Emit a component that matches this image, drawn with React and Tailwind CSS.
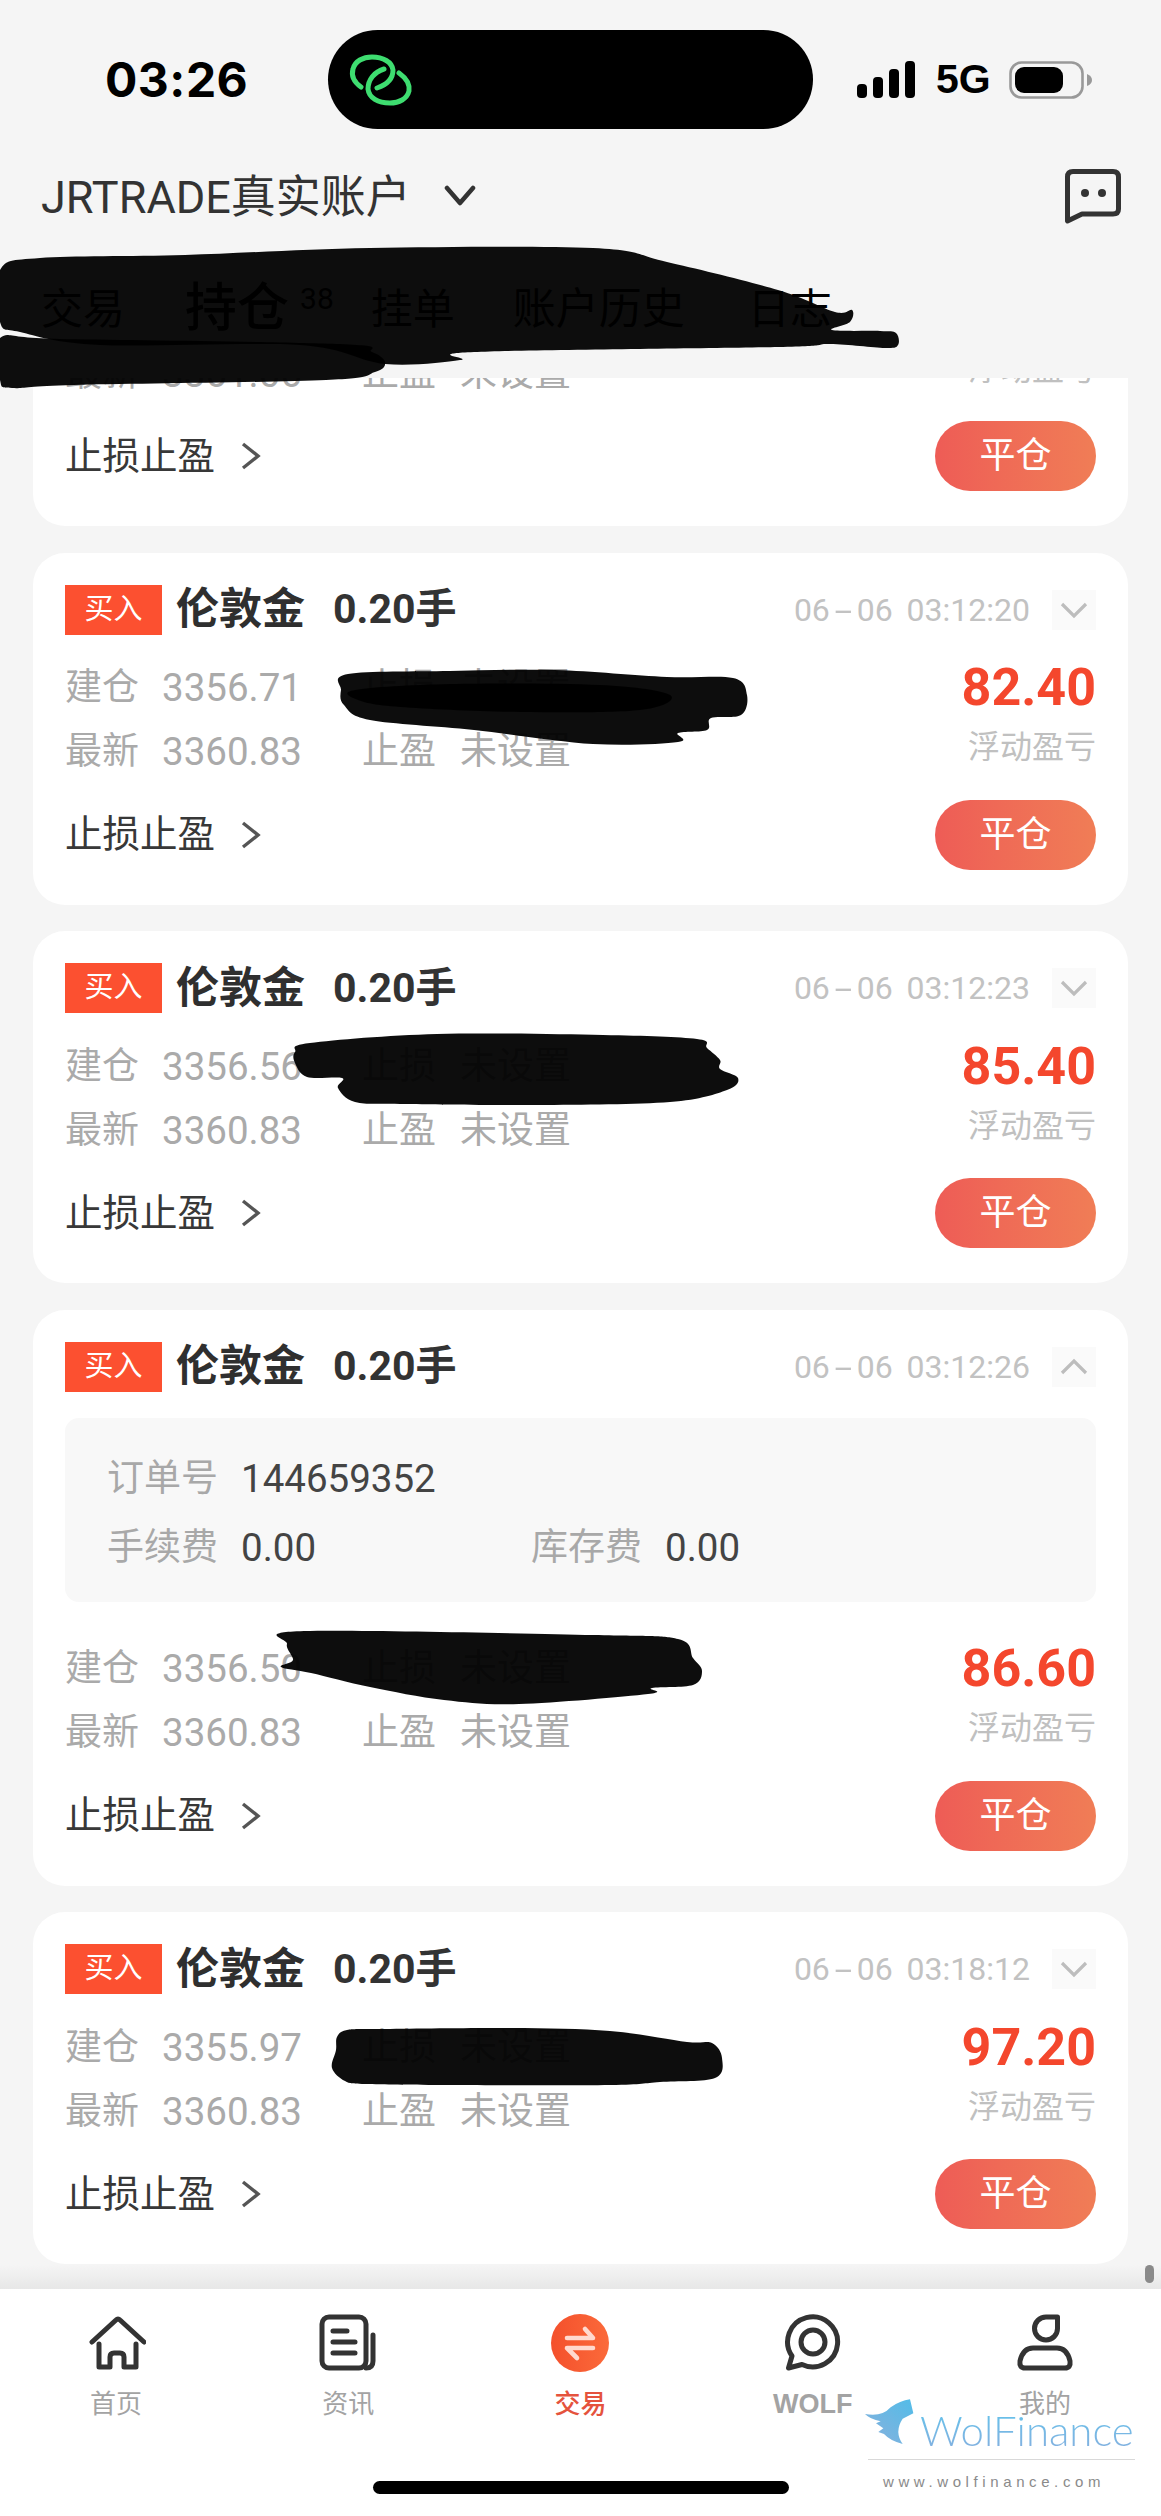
import React from "react";

function smooth(pts) {
  const n = pts.length;
  let d = `M${pts[0][0]} ${pts[0][1]}`;
  for (let i = 0; i < n; i++) {
    const p0 = pts[(i - 1 + n) % n], p1 = pts[i], p2 = pts[(i + 1) % n], p3 = pts[(i + 2) % n];
    const c1x = p1[0] + (p2[0] - p0[0]) / 6, c1y = p1[1] + (p2[1] - p0[1]) / 6;
    const c2x = p2[0] - (p3[0] - p1[0]) / 6, c2y = p2[1] - (p3[1] - p1[1]) / 6;
    d += ` C${c1x.toFixed(1)} ${c1y.toFixed(1)} ${c2x.toFixed(1)} ${c2y.toFixed(1)} ${p2[0]} ${p2[1]}`;
  }
  return d + "Z";
}

const SCRIBBLES = [
  [[0,270],[40,258],[185,255],[370,248],[593,248],[667,262],[778,290],[835,312],[852,310],[850,322],[832,330],[880,331],[896,333],[898,345],[885,348],[830,344],[778,347],[474,352],[460,360],[385,364],[300,345],[100,345],[20,332],[0,322]],
  [[0,338],[60,339],[340,344],[372,352],[385,362],[375,372],[326,380],[74,385],[12,388],[0,380]],
  [[348,674],[450,671],[555,670],[667,677],[733,678],[747,695],[741,715],[711,718],[707,730],[678,733],[678,742],[593,744],[474,730],[370,720],[344,705],[341,690]],
  [[355,690],[450,684],[600,685],[670,695],[640,710],[520,712],[400,707],[358,700]],
  [[295,1052],[310,1043],[437,1034],[603,1035],[697,1039],[707,1048],[720,1060],[720,1069],[738,1078],[727,1090],[670,1102],[537,1105],[400,1104],[355,1102],[338,1088],[342,1078],[307,1077],[295,1063]],
  [[304,1631],[593,1635],[678,1639],[693,1658],[702,1671],[693,1685],[652,1688],[648,1694],[519,1704],[444,1700],[370,1687],[311,1673],[281,1667],[293,1660],[287,1644]],
  [[347,2030],[380,2029],[510,2028],[610,2031],[687,2042],[712,2043],[722,2058],[715,2078],[660,2082],[610,2085],[450,2085],[365,2084],[345,2081],[332,2068],[336,2050],[337,2037]],
];

function Chevron({ up }) {
  return (
    <div className="w-[44px] h-[40px] ml-[22px] bg-[#fafafa] flex items-center justify-center">
      <svg width="30" height="20" viewBox="0 0 30 20" fill="none" stroke="#bdbdbd" strokeWidth="3.2">
        <path d={up ? "M3 16 L15 4 L27 16" : "M3 4 L15 16 L27 4"} />
      </svg>
    </div>
  );
}

function Card({ date, open, price, profit, order }) {
  return (
    <div className="bg-white rounded-[32px] px-[32px] pt-[32px] pb-[35px] flex flex-col">
      <div className="flex items-center h-[50px]">
        <div className="w-[97px] h-[50px] bg-[#fc5030] text-white text-[29px] flex items-center justify-center">买入</div>
        <span className="ml-[14px] w-[157px] text-[43px] font-bold text-[#2f2f2f] leading-none">伦敦金</span>
        <span className="text-[41px] font-bold text-[#333] leading-none">0.20手</span>
        <span className="ml-auto text-[32px] text-[#c2c2c2] leading-none [word-spacing:6px]">
          {date.slice(0, 2)}
          <span className="inline-block mx-[9px] scale-x-200">-</span>
          {date.slice(3)}
        </span>
        <Chevron up={!!order} />
      </div>
      {order && (
        <div className="mt-[26px] mb-[14px] h-[184px] bg-[#f8f8f8] rounded-[14px] px-[42px] pt-[25px] text-[37px]">
          <div className="flex items-center h-[72px]">
            <span className="w-[134px] text-[#a8a8a8]">订单号</span>
            <span className="text-[38.5px] text-[#444]">{order}</span>
          </div>
          <div className="flex items-center h-[66px]">
            <span className="w-[134px] text-[#a8a8a8]">手续费</span>
            <span className="w-[290px] text-[38.5px] text-[#444]">0.00</span>
            <span className="w-[134px] text-[#a8a8a8]">库存费</span>
            <span className="text-[38.5px] text-[#444]">0.00</span>
          </div>
        </div>
      )}
      <div className="mt-[20px] text-[37px] text-[#aaaaaa]">
        <div className="flex items-center h-[65px] pt-[2px]">
          <span className="w-[97px]">建仓</span>
          <span className="w-[200px] text-[38.5px]">{open}</span>
          <span className="w-[98px]">止损</span>
          <span>未设置</span>
          <span className="ml-auto text-[52px] font-bold text-[#f4472d] leading-none">{price}</span>
        </div>
        <div className="flex items-center h-[65px]">
          <span className="w-[97px]">最新</span>
          <span className="w-[200px] text-[38.5px]">{profit}</span>
          <span className="w-[98px]">止盈</span>
          <span>未设置</span>
          <span className="ml-auto pb-[10px] text-[32px] text-[#c0c0c0]">浮动盈亏</span>
        </div>
      </div>
      <div className="mt-[15px] h-[70px] flex items-center">
        <span className="text-[37.5px] text-[#383838]">止损止盈</span>
        <svg className="ml-[25px]" width="22" height="30" viewBox="0 0 22 30" fill="none" stroke="#555" strokeWidth="3.4">
          <path d="M3 3 L18 15 L3 27" />
        </svg>
        <button className="ml-auto w-[161px] h-[70px] rounded-full bg-gradient-to-r from-[#ee5c56] to-[#f07d56] text-white text-[36px]">平仓</button>
      </div>
    </div>
  );
}

function NavItem({ label, active, wolf, children }) {
  return (
    <div className="flex flex-col items-center">
      <svg width="60" height="60" viewBox="0 0 60 60" fill="none" stroke="#333" strokeWidth="5" strokeLinecap="round" strokeLinejoin="round">
        {children}
      </svg>
      <span className={`mt-[13px] h-[36px] leading-[36px] ${wolf ? "text-[27px] font-bold text-[#a3a3a3] font-['Liberation_Sans',sans-serif]" : active ? "text-[26px] font-medium text-[#e5533d]" : "text-[26px] text-[#a3a3a3]"}`}>{label}</span>
    </div>
  );
}

export default function App() {
  return (
    <div className="relative w-[1161px] h-[2516px] bg-[#f5f5f5] flex flex-col overflow-hidden font-['Roboto','Noto_Sans_CJK_SC',sans-serif]">
      {/* status bar */}
      <div className="h-[152px] pt-[30px] shrink-0">
        <div className="flex items-center h-[99px] pl-[105px]">
          <span className="w-[223px] text-[48px] font-bold text-black font-['Inter',sans-serif] tracking-[0.5px]">03:26</span>
          <div className="w-[485px] h-[99px] bg-black rounded-[50px] flex items-center pl-[17px]">
            <svg width="75" height="70" viewBox="25 20 75 70" fill="none" stroke="#3edd70" strokeWidth="5" strokeLinecap="round">
              <path d="M41 62 C34 57 31 51 33 44 C35 36 43 32 52 32 C63 32 72 37 73 45 C73 54 66 60 57 63" />
              <path d="M79 48 C86 53 90 59 89 66 C87 74 79 78 70 78 C58 78 49 73 48 64 C48 55 54 47 64 44" />
            </svg>
          </div>
          <div className="ml-[44px] flex items-center">
            <svg width="59" height="38" viewBox="0 0 59 38" fill="black">
              <rect x="0" y="23" width="10" height="14" rx="4" />
              <rect x="16" y="16" width="10" height="21" rx="4" />
              <rect x="32" y="8" width="10" height="29" rx="4" />
              <rect x="48" y="0" width="10" height="37" rx="4" />
            </svg>
            <span className="ml-[20px] w-[73px] text-[41px] font-bold text-black font-['Liberation_Sans',sans-serif] leading-none">5G</span>
            <svg width="84" height="38" viewBox="0 0 84 38">
              <rect x="1.5" y="1.5" width="72" height="35" rx="11" fill="none" stroke="#999" strokeWidth="2.6" />
              <rect x="6" y="6" width="48" height="26" rx="9" fill="black" />
              <path d="M78 13 Q83 15 83 19 Q83 23 78 25 Z" fill="#999" />
            </svg>
          </div>
        </div>
      </div>
      {/* header */}
      <div className="h-[88px] shrink-0 flex items-center pl-[41px] pr-[39px]">
        <span className="text-[45px] text-[#333] leading-none pt-[2px]">JRTRADE真实账户</span>
        <svg className="ml-[33px]" width="32" height="22" viewBox="0 0 32 22" fill="none" stroke="#333" strokeWidth="4.5" strokeLinecap="round" strokeLinejoin="round">
          <path d="M3 3 L16 18 L29 3" />
        </svg>
        <svg className="ml-auto" width="58" height="56" viewBox="0 0 58 56" fill="none" stroke="#333" strokeWidth="5" strokeLinejoin="round">
          <path d="M3.5 9 Q3.5 3.5 9 3.5 H49 Q54.5 3.5 54.5 9 V41 Q54.5 46 49 46 H18 L3.5 53 Z" />
          <circle cx="21" cy="25" r="4" fill="#333" stroke="none" />
          <circle cx="38" cy="25" r="4" fill="#333" stroke="none" />
        </svg>
      </div>
      {/* tabs */}
      <div className="h-[138px] shrink-0 flex items-center pl-[41px] text-[42px] text-black">
        <span>交易</span>
        <span className="ml-[60px] text-[52px] font-medium">持仓</span>
        <span className="ml-[11px] self-start mt-[36px] text-[30px]">38</span>
        <span className="ml-[37px]">挂单</span>
        <span className="ml-[58px] text-[43px]">账户历史</span>
        <span className="ml-[63px]">日志</span>
      </div>
      {/* list */}
      <div className="relative flex-1 overflow-hidden px-[33px]">
        <div className="flex flex-col gap-[26.5px] -mt-[204px]">
          <Card date="06-06 03:12:18" open="3356.80" price="78.60" profit="3361.06" />
          <Card date="06-06 03:12:20" open="3356.71" price="82.40" profit="3360.83" />
          <Card date="06-06 03:12:23" open="3356.56" price="85.40" profit="3360.83" />
          <Card date="06-06 03:12:26" open="3356.50" price="86.60" profit="3360.83" order="144659352" />
          <Card date="06-06 03:18:12" open="3355.97" price="97.20" profit="3360.83" />
        </div>
        <div className="absolute left-0 right-0 bottom-0 h-[24px] bg-gradient-to-b from-[#f5f5f5] to-[#e7e7e7]" />
        <div className="absolute right-[7px] bottom-[6px] w-[9px] h-[18px] rounded-full bg-[#8a8a8a]" />
      </div>
      {/* bottom nav */}
      <div className="h-[227px] shrink-0 bg-white pt-[24px] flex flex-col items-center">
        <div className="w-full grid grid-cols-5">
          <NavItem label="首页">
            <path d="M6 29 L30 7 Q32 5 34 7 L58 29" />
            <path d="M13 31 V54 H24 V44 Q24 40 28 40 H34 Q38 40 38 44 V54 H50 V31" />
          </NavItem>
          <NavItem label="资讯">
            <rect x="4" y="4" width="44" height="51" rx="7" />
            <path d="M55 22 V48 Q55 55 48 55" />
            <path d="M15 18 H29 M15 29 H37 M15 40 H37" />
          </NavItem>
          <NavItem label="交易" active>
            <defs>
              <linearGradient id="trade" x1="0" y1="0" x2="1" y2="0">
                <stop offset="0" stopColor="#f4502c" />
                <stop offset="1" stopColor="#fb6a3a" />
              </linearGradient>
            </defs>
            <circle cx="30" cy="30" r="29" fill="url(#trade)" stroke="none" />
            <path d="M17 25 H43 L35 16" stroke="#ffd9ce" strokeWidth="4.6" />
            <path d="M43 35 H17 L27 45" stroke="#ffd9ce" strokeWidth="4.6" />
          </NavItem>
          <NavItem label="WOLF" wolf>
            <path d="M9 43 L5.5 55 L19 51.5 A25 25 0 1 0 9 43 Z" />
            <circle cx="30" cy="29" r="12" />
          </NavItem>
          <NavItem label="我的">
            <path d="M31 4 H42.5 V15.5 A11.5 11.5 0 1 1 31 4 Z" />
            <path d="M18 35 H42 Q52 35 55 48 Q56 55 50 55 H10 Q4 55 5 48 Q8 35 18 35 Z" />
          </NavItem>
        </div>
        <div className="mt-[59px] w-[416px] h-[13px] rounded-full bg-black" />
      </div>

      {/* marker strokes laid over the page */}
      <svg className="absolute left-0 top-0 pointer-events-none" width="1161" height="2516" viewBox="0 0 1161 2516">
        {SCRIBBLES.map((pts, i) => (
          <path key={i} d={smooth(pts)} fill="#000" fillOpacity="0.95" />
        ))}
      </svg>

      {/* watermark */}
      <svg className="absolute left-[850px] top-[2300px]" width="311" height="200" viewBox="0 0 933 600">
        <defs>
          <linearGradient id="fish" x1="1" y1="0" x2="0" y2="1">
            <stop offset="0" stopColor="#52bce8" />
            <stop offset="1" stopColor="#8bb0dc" />
          </linearGradient>
        </defs>
        <path d="M180 298 L190 340 L158 356 Q132 395 158 432 Q120 422 102 402 L85 396 L100 385 L78 370 L92 364 Q60 358 45 342 Q95 352 122 322 Q150 302 180 298 Z" fill="url(#fish)" />
      </svg>
      <span className="absolute left-[920px] top-[2406px] text-[42px] leading-[48px] font-light font-['Lato',sans-serif] text-transparent bg-clip-text bg-gradient-to-b from-[#5ec4ec] to-[#86aede]">WolFinance</span>
      <div className="absolute left-[868px] top-[2459px] w-[267px] h-[1px] bg-[#d9d9d9]" />
      <span className="absolute left-[883px] top-[2472px] text-[15px] leading-[20px] tracking-[4.6px] text-[#8a8a8a] font-['Liberation_Sans',sans-serif]">www.wolfinance.com</span>
    </div>
  );
}
